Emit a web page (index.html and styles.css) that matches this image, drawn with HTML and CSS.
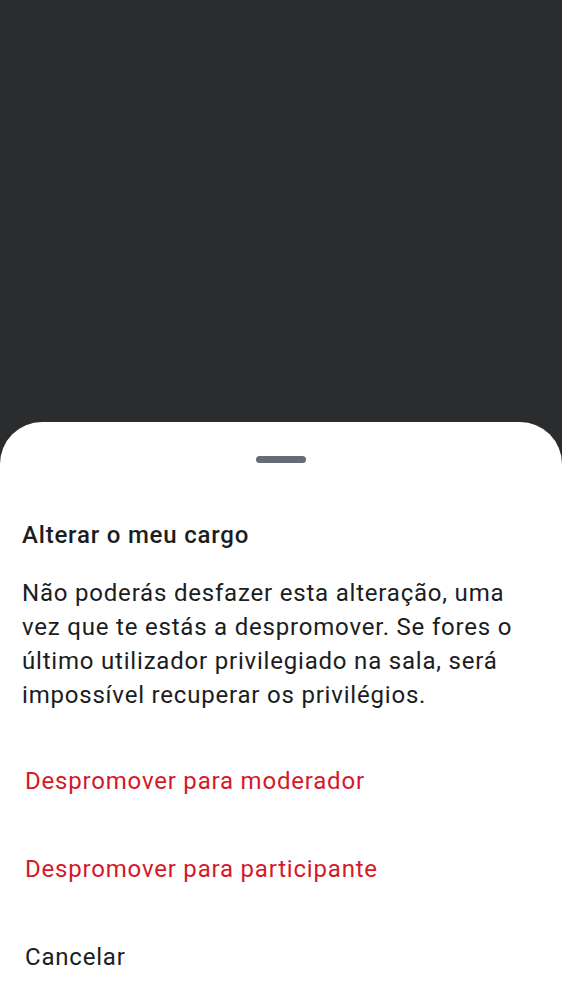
FILE: index.html
```html
<!DOCTYPE html>
<html lang="pt">
<head>
<meta charset="utf-8">
<link rel="stylesheet" href="styles.css">
</head>
<body>
<div class="screen">
  <div class="backdrop"></div>
  <div class="sheet">
    <div class="handle"></div>
    <h2 class="title">Alterar o meu cargo</h2>
    <p class="desc">Não poderás desfazer esta alteração, uma vez que te estás a despromover. Se fores o último utilizador privilegiado na sala, será impossível recuperar os privilégios.</p>
    <div class="actions">
      <div class="action danger">Despromover para moderador</div>
      <div class="action danger">Despromover para participante</div>
      <div class="action">Cancelar</div>
    </div>
  </div>
</div>
</body>
</html>
```
FILE: styles.css
```css
html, body {
  margin: 0;
  padding: 0;
  height: 100%;
}
body {
  background: #2b2c2e;
  font-family: Roboto, "Noto Sans", sans-serif;
  overflow: hidden;
}
.screen {
  display: flex;
  flex-direction: column;
  height: 1000px;
}
.backdrop {
  height: 422px;
  flex: none;
}
.sheet {
  flex: 1;
  background: #ffffff;
  border-radius: 42px 42px 0 0;
  display: flex;
  flex-direction: column;
  padding: 0 22px;
}
.handle {
  align-self: center;
  width: 50px;
  height: 7px;
  border-radius: 4px;
  background: #656c75;
  margin-top: 34px;
  flex: none;
}
.title {
  margin: 57px 0 0 0;
  font-size: 24px;
  font-weight: 500;
  line-height: 30px;
  color: #1b1d22;
  letter-spacing: 0.8px;
}
.desc {
  margin: 26px 0 0 0;
  font-size: 24px;
  line-height: 34px;
  color: #1b1d22;
  letter-spacing: 0.8px;
}
.actions {
  display: flex;
  flex-direction: column;
  margin-top: 25px;
}
.action {
  height: 88px;
  flex: none;
  display: flex;
  align-items: center;
  padding-left: 3px;
  font-size: 24px;
  color: #1b1d22;
  letter-spacing: 0.8px;
}
.action.danger {
  color: #d51928;
}
```
